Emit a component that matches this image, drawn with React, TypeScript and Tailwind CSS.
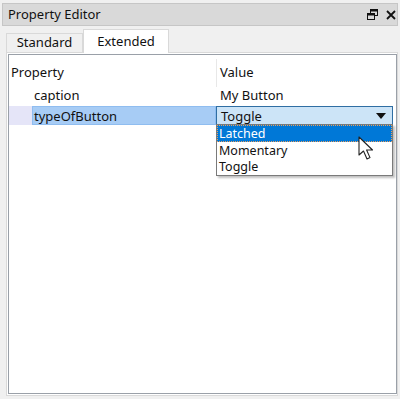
import React from 'react';

const font = { fontFamily: '"Noto Sans", "Open Sans", sans-serif' };

function RestoreIcon() {
  return (
    <svg width="11" height="11" viewBox="0 0 11 11" className="block">
      <rect x="3.5" y="0.5" width="7" height="6" fill="none" stroke="#111" strokeWidth="1" />
      <rect x="3.5" y="0.5" width="7" height="2" fill="#111" />
      <rect x="0.5" y="4.5" width="7" height="6" fill="#dadada" stroke="#111" strokeWidth="1" />
      <rect x="0.5" y="4.5" width="7" height="2" fill="#111" />
    </svg>
  );
}

function CloseIcon() {
  return (
    <svg width="10" height="10" viewBox="0 0 10 10" className="block">
      <path d="M1 1 L9 9 M9 1 L1 9" stroke="#111" strokeWidth="1.8" />
    </svg>
  );
}

function Cursor() {
  return (
    <svg width="18" height="26" viewBox="0 0 18 26" className="block">
      <path
        d="M1 1 L1 19 L5.5 15 L9 23 L12 21.6 L8.6 14 L14.5 14 Z"
        fill="#fff"
        stroke="#222"
        strokeWidth="1.1"
        strokeLinejoin="round"
      />
    </svg>
  );
}

export default function App() {
  return (
    <div className="w-[400px] h-[399px] bg-[#f0f0f0] flex flex-col text-[13px] text-[#111]" style={font}>
      {/* Title bar */}
      <div className="mx-[2px] mt-[3px] h-[23px] bg-[#d9d9d9] border border-[#c6c6c6] flex items-center pl-[5px] pr-[1px]">
        <span className="flex-1">Property Editor</span>
        <div className="flex items-center gap-[8px]">
          <RestoreIcon />
          <CloseIcon />
        </div>
      </div>

      {/* Tabs */}
      <div className="flex items-end h-[26px] pl-[6px] shrink-0">
        <div className="w-[77px] h-[19px] bg-[#f0f0f0] border border-b-0 border-[#d9d9d9] flex items-center justify-center">
          Standard
        </div>
        <div className="w-[86px] h-[24px] bg-white border border-b-0 border-[#d9d9d9] flex items-center justify-center -mb-[1px] relative z-10">
          Extended
        </div>
      </div>

      {/* Panel */}
      <div className="ml-[6px] mr-[2px] mb-[3px] flex-1 bg-white border border-[#d9d9d9] p-[1px] pr-0">
        <div className="h-full border border-[#9aa0a8] relative">
          {/* header */}
          <div className="flex h-[31px] pt-[4px]">
            <div className="w-[207px] pl-[2px] flex items-center">Property</div>
            <div className="w-px h-[28px] bg-[#e8e8e8]" />
            <div className="pl-[3px] flex items-center">Value</div>
          </div>
          {/* caption */}
          <div className="flex h-[20px] items-center">
            <div className="w-[207px] pl-[25px]">caption</div>
            <div className="w-px" />
            <div className="pl-[3px]">My Button</div>
          </div>
          {/* typeOfButton */}
          <div className="flex h-[19px] items-stretch leading-[16px]">
            <div className="w-[23px] bg-[#e5e5f8]" />
            <div className="w-[184px] bg-[#a7ccf5] border border-[#8fbdf0] flex items-center pl-[1px]">typeOfButton</div>
            <div className="flex-1 mr-[3px] bg-[#cce4f7] border border-[#2f6ea3] flex items-center pl-[4px] pr-[6px]">
              <span className="flex-1">Toggle</span>
              <svg width="10" height="6" viewBox="0 0 10 6" className="block">
                <path d="M0 0 L10 0 L5 6 Z" fill="#111" />
              </svg>
            </div>
          </div>

          {/* dropdown list */}
          <div className="absolute left-[207px] right-[3px] top-[69px] bg-white border border-[#7a7a7a] shadow-[2px_2px_2px_rgba(0,0,0,0.25)] flex flex-col text-[12.5px] leading-[17px]">
            <div className="h-[17px] bg-[#0078d7] text-white pl-[2px] flex items-center outline-1 outline-dotted outline-[#e8a060] -outline-offset-1">
              Latched
            </div>
            <div className="h-[16px] pl-[2px] flex items-center">Momentary</div>
            <div className="h-[17px] pl-[2px] flex items-center">Toggle</div>
          </div>

          {/* cursor */}
          <div className="absolute left-[349px] top-[81px]">
            <Cursor />
          </div>
        </div>
      </div>
    </div>
  );
}
